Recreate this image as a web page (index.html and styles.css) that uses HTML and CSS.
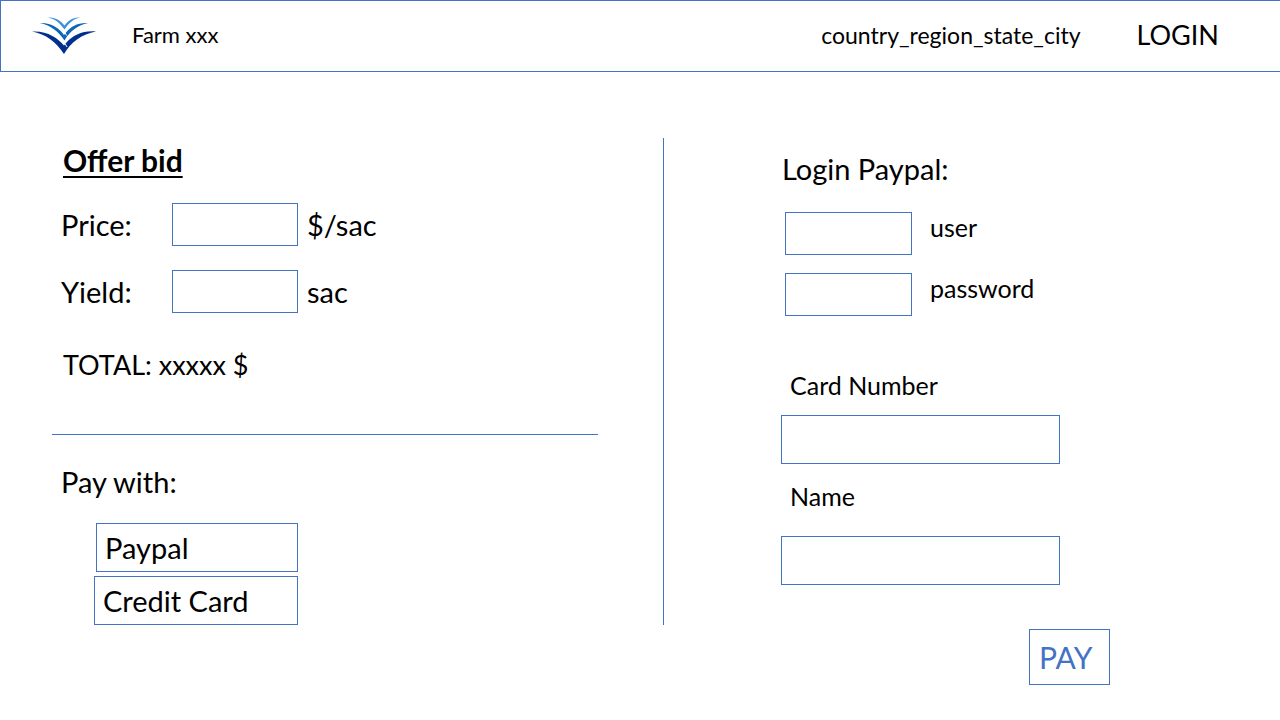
FILE: index.html
```html
<!DOCTYPE html>
<html lang="en">
<head>
<meta charset="utf-8">
<meta name="viewport" content="width=device-width, initial-scale=1">
<title>Farm xxx</title>
<link rel="stylesheet" href="styles.css">
</head>
<body>
<header class="topbar">
  <svg class="logo" viewBox="0 0 64 36" aria-hidden="true">
    <path fill="#3c91dd" d="M16 0.500C24 0 29 4 32.500 8.500C36 4 40 0 48 0.500C41 2 37 6 32.500 12.500C27 5 23 2 16 0.500Z"/>
    <path fill="#0b68b8" d="M8 6C19 5.500 27 11 32 18L34 15.500C39 9.500 45 5.500 56 6C46 8 38 14 32.500 23.500C26 14 18 8 8 6Z"/>
    <path fill="#002f8e" d="M0 14.500C15 13.500 26 21 32 28.500L34.500 25.500C41 18.500 50 13.500 64 14.500C50 17 39 25 32 37C24 25 14 17 0 14.500Z"/>
    <path fill="none" stroke="#fff" stroke-width="1" d="M33 15.500L34.500 18.500M33 26.500L35 30"/>
  </svg>
  <span class="farm">Farm xxx</span>
  <span class="place">country_region_state_city</span>
  <button class="login" type="button">LOGIN</button>
</header>
<main class="content">
  <section class="offer">
    <h1 class="title">Offer bid</h1>
    <div class="bid-row">
      <label class="bid-label" for="price">Price:</label>
      <input class="box small" id="price" type="text">
      <span>$/sac</span>
    </div>
    <div class="bid-row">
      <label class="bid-label" for="yield">Yield:</label>
      <input class="box small" id="yield" type="text">
      <span>sac</span>
    </div>
    <p class="total">TOTAL: xxxxx $</p>
    <hr class="rule">
    <h2 class="pay-with">Pay with:</h2>
    <div class="methods">
      <button class="box method paypal" type="button">Paypal</button>
      <button class="box method card" type="button">Credit Card</button>
    </div>
  </section>
  <form class="payment">
    <h2 class="heading">Login Paypal:</h2>
    <div class="account-row">
      <input class="box small" id="user" type="text">
      <label for="user">user</label>
    </div>
    <div class="account-row">
      <input class="box small" id="password" type="password">
      <label for="password">password</label>
    </div>
    <label class="card-label number-label" for="number">Card Number</label>
    <input class="box wide" id="number" type="text">
    <label class="card-label name-label" for="name">Name</label>
    <input class="box wide" id="name" type="text">
    <button class="box pay" type="button">PAY</button>
  </form>
</main>
</body>
</html>
```
FILE: styles.css
```css
* { box-sizing: border-box; }

body {
  margin: 0;
  background: #fff;
  color: #000;
  font: 29px/36px Lato, "Open Sans", sans-serif;
}

h1, h2, p { margin: 0; font-size: 29px; font-weight: 400; }
button, input { font: inherit; color: inherit; border-radius: 0; }
button { background: none; border: 0; padding: 0; cursor: pointer; }

.topbar {
  display: flex;
  align-items: center;
  height: 72px;
  padding: 0 61px 2px 31px;
  border: 1px solid #4472c4;
  border-right: 0;
}
.logo { width: 64px; height: 36px; overflow: visible; }
.farm { margin-left: 36px; font-size: 22px; }
.place { margin-left: auto; font-size: 23px; }
.login { margin-left: 56px; font-size: 27px; }

.content {
  display: grid;
  grid-template-columns: 83fr 77fr;
  align-items: start;
  padding-top: 66px;
}

.box { background: #fff; border: 1px solid #4472c4; }
.small { width: 127px; height: 43px; padding: 0 8px; }
.wide { width: 279px; height: 49px; padding: 0 8px; }

.offer {
  padding: 4px 65px 0 61px;
  border-right: 1px solid #4472c4;
}
.title {
  padding-left: 2px;
  font-size: 30px;
  font-weight: 700;
  text-decoration: underline;
  text-decoration-thickness: 2px;
  text-underline-offset: 4px;
}
.bid-row {
  display: flex;
  align-items: center;
  gap: 9px;
  margin-top: 24px;
}
.title + .bid-row { margin-top: 25px; }
.bid-row .small { width: 126px; }
.bid-label { width: 102px; }
.total { margin-top: 34px; padding-left: 2px; font-size: 27px; }
.rule {
  margin: 51px 0 29px -9px;
  border: 0;
  border-top: 1px solid #4472c4;
}
.methods {
  display: flex;
  flex-direction: column;
  align-items: flex-end;
  gap: 4px;
  width: 237px;
  margin-top: 23px;
}
.method { height: 49px; padding-left: 8px; text-align: left; }
.paypal { width: 202px; }
.card { width: 204px; }

.payment {
  display: flex;
  flex-direction: column;
  align-items: flex-start;
  width: 446px;
  padding: 13px 0 24px 117px;
}
.heading { margin-bottom: 25px; padding-left: 1px; }
.account-row {
  display: flex;
  gap: 18px;
  margin: 0 0 18px 4px;
  font-size: 25px;
  line-height: 30px;
}
.card-label { padding-left: 9px; font-size: 25px; line-height: 28px; }
.number-label { margin: 37px 0 16px; }
.name-label { margin: 18px 0 26px; }
.pay {
  align-self: flex-end;
  width: 81px;
  height: 56px;
  margin-top: 44px;
  padding-left: 9px;
  color: #4472c4;
  font-size: 30px;
  text-align: left;
}
```
